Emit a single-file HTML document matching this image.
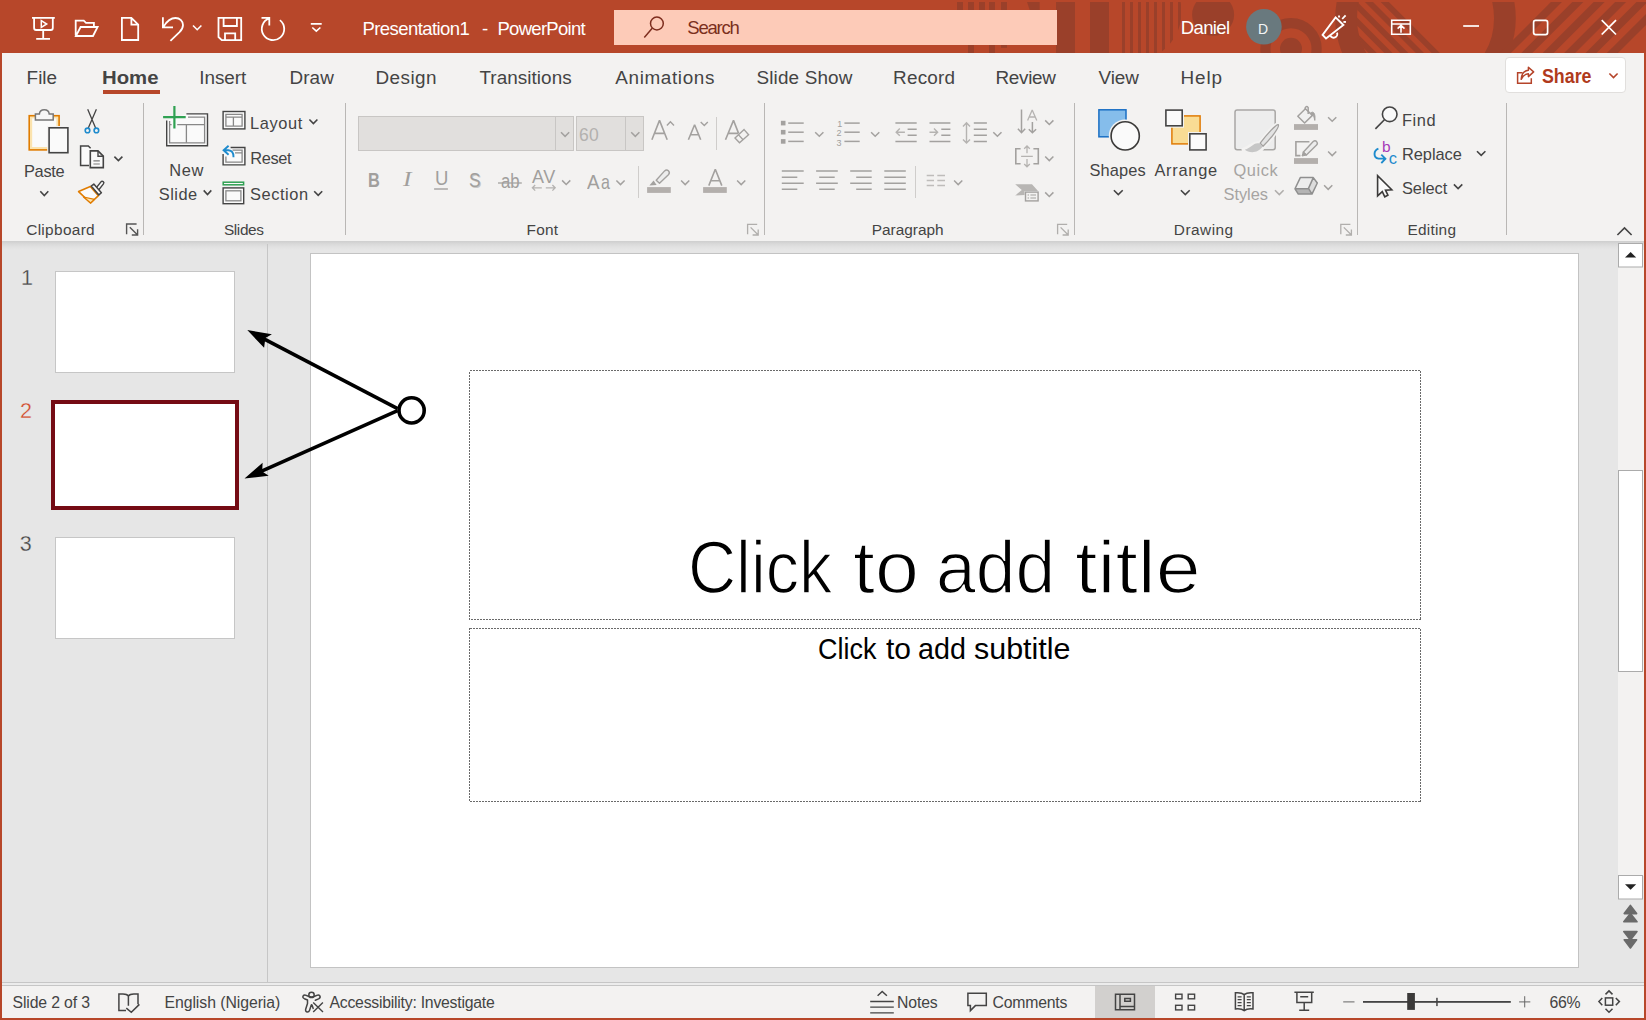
<!DOCTYPE html>
<html lang="en">
<head>
<meta charset="utf-8">
<title>Presentation1 - PowerPoint</title>
<style>
html,body{margin:0;padding:0;}
body{width:1646px;height:1020px;position:relative;overflow:hidden;background:#e6e6e6;font-family:'Liberation Sans',sans-serif;}
.t{position:absolute;line-height:1;white-space:pre;}
.abs{position:absolute;}
svg{position:absolute;overflow:visible;}
#titlebar{position:absolute;left:0;top:0;width:1646px;height:53px;background:#b7472a;}
#tabs{position:absolute;left:2px;top:53px;width:1642px;height:47px;background:#f3f2f1;}
#ribbon{position:absolute;left:2px;top:100px;width:1642px;height:141px;background:#f3f2f1;}
#ribshadow{position:absolute;left:2px;top:241px;width:1642px;height:9px;background:linear-gradient(#cecece,#dadada 35%,#e2e2e2 70%,#e6e6e6);}
#thumbpane{position:absolute;left:2px;top:247px;width:265px;height:735px;background:#e6e6e6;}
#splitter{position:absolute;left:267px;top:244px;width:1px;height:738px;background:#c6c6c6;}
#editpane{position:absolute;left:268px;top:247px;width:1350px;height:735px;background:#e6e6e6;}
#slide{position:absolute;left:310px;top:253px;width:1267px;height:713px;background:#fff;border:1px solid #c3c3c3;box-sizing:content-box;}
#vscroll{position:absolute;left:1618px;top:250px;width:26px;height:626px;background:#f3f2f1;}
#statusbar{position:absolute;left:2px;top:986px;width:1642px;height:32px;background:#f3f2f1;}
.winb{position:absolute;background:#b7472a;}
.sep{position:absolute;width:1px;background:#b9b7b5;top:103px;height:132px;}
.sep2{position:absolute;width:1px;background:#cfcdcb;}
.thumb{position:absolute;left:55px;width:178px;height:100px;background:#fff;border:1px solid #c6c6c6;}
.ph{position:absolute;}
</style>
</head>
<body>
<div id="titlebar">
<svg width="1646" height="53" viewBox="0 0 1646 53">
<defs><clipPath id="tbclip"><rect x="0" y="2" width="1646" height="51"/></clipPath><clipPath id="thinclip"><circle cx="1132.6" cy="12" r="49"/></clipPath><clipPath id="wedgeclip"><rect x="1300" y="2" width="56.1" height="51"/></clipPath><clipPath id="dstripe"><circle cx="1425.5" cy="18.2" r="69"/></clipPath></defs>
<g id="tbpattern" fill="#9a402a" clip-path="url(#tbclip)">
<rect x="957" y="0" width="6" height="30"/><rect x="968" y="0" width="6" height="53"/><rect x="979" y="0" width="6" height="30"/><rect x="989" y="0" width="6" height="53"/><rect x="1001" y="0" width="6" height="47.8"/><polygon points="1026.4,0 1039.7,0 1039.7,14 1031,14"/><rect x="1056" y="0" width="19" height="53"/><rect x="1090" y="0" width="19" height="53"/>
<g clip-path="url(#thinclip)"><rect x="1122" y="0" width="3" height="53"/><rect x="1130" y="0" width="3" height="53"/><rect x="1138" y="0" width="3" height="53"/><rect x="1146" y="0" width="3" height="53"/><rect x="1154" y="0" width="3" height="53"/><rect x="1162" y="0" width="3" height="53"/><rect x="1170" y="0" width="3" height="53"/><rect x="1178" y="0" width="3" height="53"/></g>
<circle cx="1213.1" cy="14.8" r="21"/>
<circle cx="1291" cy="48.7" r="25.6" fill="none" stroke="#9a402a" stroke-width="10.2"/><circle cx="1291" cy="48.7" r="11"/>
<circle cx="1425.5" cy="18.2" r="79.4" fill="none" stroke="#9a402a" stroke-width="21.8"/>
<g clip-path="url(#dstripe)"><polygon points="1300.0,0 1308.1,0 1361.1,53 1353.0,53"/><polygon points="1315.7,0 1323.8,0 1376.8,53 1368.7,53"/><polygon points="1331.4,0 1339.5,0 1392.5,53 1384.4,53"/><polygon points="1347.2,0 1355.3,0 1408.3,53 1400.2,53"/><polygon points="1362.9,0 1371.0,0 1424.0,53 1415.9,53"/><polygon points="1378.7,0 1386.8,0 1439.8,53 1431.7,53"/></g>
<polygon points="1552.9,0 1563.9,0 1510.9,53 1499.9,53"/><polygon points="1574.3,0 1585.3,0 1532.3,53 1521.3,53"/><polygon points="1595.7,0 1606.7,0 1553.7,53 1542.7,53"/><polygon points="1617.1,0 1628.1,0 1575.1,53 1564.1,53"/><polygon points="1638.5,0 1649.5,0 1596.5,53 1585.5,53"/><polygon points="1659.9,0 1670.9,0 1617.9,53 1606.9,53"/>
</g>
<rect x="614" y="10" width="443" height="35" fill="#fdcbb8"/>
<g fill="none" stroke="#7d2d1e" stroke-width="1.5"><circle cx="656.9" cy="23.5" r="6.4"/><path d="M652.2,28.3 L644.3,37.4"/></g>
<circle cx="1263.9" cy="26.8" r="17.8" fill="#69797e"/>
<g id="qat" fill="none" stroke="#fff" stroke-width="1.8" stroke-linejoin="miter">
<path d="M32,17.9 H54.8 M34.1,18 V28 Q34.1,30 36.1,30 H50.8 Q52.8,30 52.8,28 V18 M43.2,30 V38.8 M36.2,38.8 H50"/>
<path d="M41.3,20.6 V27.4 L46.7,24 Z" stroke-width="1.5"/>
<path d="M75.7,35.5 V20.7 H83.8 L86,22.8 H93.9 V26.6 M80.6,27 H97.6 L93,36 H75.9 Z"/>
<path d="M121.9,17.9 H131.4 L138.2,24.7 V40 H121.9 Z M131.4,17.9 V24.7 H138.2"/>
<path d="M162.9,17.3 V27.4 H173 M163.6,26.6 C167,21 171,18 175.5,18 C180,18 183,21.3 183,25 C183,28 181.7,30 179.5,32.2 L170.4,40.8"/>
<path d="M193,25.5 L197.2,29.7 L201.4,25.5" stroke-width="1.6"/>
<path d="M218.5,17.9 H241.2 V40.2 H221.8 L218.5,37 Z M223.6,17.9 V26 H236.9 V17.9 M225,40.2 V33.3 H235.2 V40.2"/>
<path d="M269.2,18.4 A11.2,11.2 0 1 0 279.9,20.1 M261.5,17.9 H269.3 V25.6"/>
<path d="M310.8,23.9 H321.7 M312.3,27.5 L316.3,31.2 L320.4,27.5" stroke-width="1.6"/>
</g>
<g id="winctl" fill="none" stroke="#fff" stroke-width="1.7">
<path d="M1335.6,17.4 L1343.4,25 L1326,38.4 L1322.6,35 Z M1330.2,35.4 A3.5,3.5 0 0 0 1337,32.6" stroke-width="1.9"/>
<path d="M1338.7,15.4 L1339.4,17.6 M1345.6,15.3 L1342.2,19 M1343.4,21.8 L1345.9,22" stroke-width="1.8"/>
<path d="M1391.7,20.3 H1410.3 V34.2 H1391.7 Z M1391.7,24 H1410.3 M1401,32.8 V26.2 M1397.6,28.6 L1401,25.4 L1404.5,28.6" stroke-width="1.6"/>
<path d="M1463.2,26 H1479"/>
<rect x="1533.6" y="20.4" width="14" height="14.2" rx="2"/>
<path d="M1601.7,20.2 L1616,34.5 M1616,20.2 L1601.7,34.5"/>
</g>
</svg>
<span class="t" style="left:362.50px;top:20.25px;font-size:18.5px;color:#fff;letter-spacing:-0.575px;">Presentation1</span>
<span class="t" style="left:481.90px;top:20.25px;font-size:18.5px;color:#fff;letter-spacing:-0.600px;">-</span>
<span class="t" style="left:497.50px;top:20.25px;font-size:18.5px;color:#fff;letter-spacing:-0.722px;">PowerPoint</span>
<span class="t" style="left:687.30px;top:19.25px;font-size:18.5px;color:#7b2f1d;letter-spacing:-1.200px;">Search</span>
<span class="t" style="left:1180.80px;top:19.25px;font-size:18.5px;color:#fff;letter-spacing:-0.640px;">Daniel</span>
<span class="t" style="left:1257.90px;top:22.00px;font-size:14px;color:#f4f6f6;letter-spacing:0.400px;">D</span>
</div>

<div id="tabs"></div>
<div class="abs" id="tabrow" style="left:0;top:0">
<div class="abs" id="sharebtn" style="left:1505px;top:57px;width:119px;height:34px;background:#fff;border:1px solid #e1dfdd;border-radius:4px"></div>
<span class="t" style="left:26.60px;top:69.05px;font-size:18.9px;color:#444;">File</span>
<span class="t" style="left:199.30px;top:69.05px;font-size:18.9px;color:#444;letter-spacing:-0.060px;">Insert</span>
<span class="t" style="left:289.40px;top:69.05px;font-size:18.9px;color:#444;letter-spacing:0.133px;">Draw</span>
<span class="t" style="left:375.40px;top:69.05px;font-size:18.9px;color:#444;letter-spacing:0.480px;">Design</span>
<span class="t" style="left:479.40px;top:69.05px;font-size:18.9px;color:#444;letter-spacing:0.060px;">Transitions</span>
<span class="t" style="left:615.30px;top:69.05px;font-size:18.9px;color:#444;letter-spacing:0.622px;">Animations</span>
<span class="t" style="left:756.50px;top:69.05px;font-size:18.9px;color:#444;letter-spacing:0.156px;">Slide Show</span>
<span class="t" style="left:893.10px;top:69.05px;font-size:18.9px;color:#444;letter-spacing:0.220px;">Record</span>
<span class="t" style="left:995.50px;top:69.05px;font-size:18.9px;color:#444;letter-spacing:-0.320px;">Review</span>
<span class="t" style="left:1098.50px;top:69.05px;font-size:18.9px;color:#444;letter-spacing:-0.067px;">View</span>
<span class="t" style="left:1180.60px;top:69.05px;font-size:18.9px;color:#444;letter-spacing:0.833px;">Help</span>
<span class="t" style="left:102.22px;top:69.05px;font-size:18.9px;color:#444;font-weight:700;transform:scaleX(1.076);transform-origin:0 0;">Home</span>
<span class="t" style="left:1541.70px;top:67.25px;font-size:19.5px;color:#b03a1c;font-weight:700;transform:scaleX(0.913);transform-origin:0 0;">Share</span>
<div class="abs" style="left:103px;top:90px;width:57px;height:4px;background:#b7472a"></div>
<svg style="left:0;top:53px" width="1646" height="47" viewBox="0 53 1646 47">
<g id="shareicon" fill="none" stroke="#b5442a" stroke-width="1.5">
<path d="M1522.6,72.8 H1517.6 V83.2 H1531.3 V78.2"/>
<path d="M1521.2,79.3 C1521.6,74 1524.4,70.6 1528.4,70.2 V67.2 L1533.6,71.9 L1528.4,76.6 V73.7 C1525.4,73.9 1523,75.6 1521.2,79.3 Z" stroke-linejoin="round"/>
<path d="M1609.4,73.5 L1613.5,77.6 L1617.6,73.5" stroke-width="1.6"/>
</g>

</svg>
</div>

<div id="ribbon"></div>
<div class="abs" id="ribboncontent" style="left:0;top:0">
<div class="sep" style="left:143px"></div>
<div class="sep" style="left:345px"></div>
<div class="sep" style="left:764px"></div>
<div class="sep" style="left:1074px"></div>
<div class="sep" style="left:1357px"></div>
<div class="sep" style="left:1506px"></div>
<div class="sep2" style="left:716px;top:117px;height:33px"></div>
<div class="sep2" style="left:638px;top:166px;height:32px"></div>
<div class="sep2" style="left:915px;top:166px;height:32px"></div>
<div class="abs" id="fontname" style="left:358px;top:116px;width:214px;height:33px;background:#e1dfdd;border:1px solid #c8c6c4"></div>
<div class="abs" style="left:555px;top:117px;width:1px;height:33px;background:#c8c6c4"></div>
<div class="abs" id="fontsize" style="left:576px;top:116px;width:66px;height:33px;background:#e1dfdd;border:1px solid #c8c6c4"></div>
<div class="abs" style="left:625px;top:117px;width:1px;height:33px;background:#c8c6c4"></div>
<svg style="left:0;top:100px" width="1646" height="140" viewBox="0 100 1646 140">
<g id="ic-clipboard">
<!-- paste -->
<rect x="29.2" y="115.7" width="29.9" height="34.2" fill="#fbe3ae" stroke="#e07c00" stroke-width="1.6"/>
<rect x="32.2" y="118.4" width="24.2" height="28.6" fill="#fafafa"/>
<path d="M35.4,120 V114 H39.4 C39.6,111.5 41.6,109.8 44.3,109.8 C47,109.8 49,111.5 49.2,114 H53.2 V120 Z" fill="#f6f6f6" stroke="#777" stroke-width="1.5"/>
<rect x="47.2" y="126" width="22.5" height="28.6" fill="#f3f2f1"/>
<rect x="49.1" y="127.8" width="18.8" height="24.9" fill="#fafafa" stroke="#444" stroke-width="1.6"/>
<path d="M40.3,191.3 L44.3,195.5 L48.3,191.3" fill="none" stroke="#444" stroke-width="1.6"/>
<!-- cut -->
<path d="M87.7,109.3 L95.6,128 M96.4,109.3 L88.3,128" fill="none" stroke="#444" stroke-width="1.3"/>
<circle cx="87.5" cy="130.4" r="2.3" fill="none" stroke="#1e8bcd" stroke-width="1.6"/>
<circle cx="96.4" cy="130.4" r="2.3" fill="none" stroke="#1e8bcd" stroke-width="1.6"/>
<!-- copy -->
<path d="M89,165.4 H80.6 V145.9 H88.3 L90.6,148.2" fill="#fafafa" stroke="#444" stroke-width="1.5"/>
<path d="M90.3,150.9 H98 L103.3,156.2 V167.6 H90.3 Z" fill="#fafafa" stroke="#444" stroke-width="1.6"/>
<path d="M98,150.9 V156.2 H103.3" fill="none" stroke="#444" stroke-width="1.4"/>
<path d="M93.4,160.8 H99.8 M93.4,164 H99.8" stroke="#7a7a7a" stroke-width="1.2"/>
<path d="M114.4,156.6 L118.4,160.6 L122.4,156.6" fill="none" stroke="#444" stroke-width="1.6"/>
<!-- format painter -->
<path d="M78.6,191.6 L90.3,186.5 L98.4,195.6 L90.6,203 Z" fill="#fafafa" stroke="#e07c00" stroke-width="1.6" stroke-linejoin="round"/>
<path d="M83.5,197 L94.5,199.3 L90.6,203 Z" fill="#fbe3ae" stroke="#e07c00" stroke-width="1.2" stroke-linejoin="round"/>
<path d="M96.6,190 L102.2,182.9" stroke="#444" stroke-width="4.6" stroke-linecap="round"/>
<path d="M96.6,190 L102.2,182.9" stroke="#fafafa" stroke-width="1.8" stroke-linecap="round"/>
<path d="M91.2,186 L93.8,184.1 L101.4,192.8 L98.9,194.9 Z" fill="#fafafa" stroke="#444" stroke-width="1.5" stroke-linejoin="round"/>
<!-- launcher -->
<path d="M126.6,234.2 V224 H136.6 M129.8,227.2 L137.4,234.8 M137.6,229.2 V235 H131.8" fill="none" stroke="#555" stroke-width="1.4"/>
</g>
<g id="ic-slides">
<!-- new slide -->
<path d="M186.4,113.9 H207.5 V145.7 H166.7 V120.5" fill="#fafafa" stroke="#444" stroke-width="1.4"/>
<path d="M188,117.1 H204.6 V142.8 H169.6 V121" fill="none" stroke="#888" stroke-width="1.3"/>
<path d="M177.2,124.7 H204.6 M169.6,124.7 H171.6 M186.4,124.7 V142.8" fill="none" stroke="#888" stroke-width="1.3"/>
<path d="M163.1,117.1 H185.7 M174.4,106.1 V128.5" stroke="#2fa152" stroke-width="2.2"/>
<path d="M203.7,190.4 L207.5,194.5 L211.3,190.4" fill="none" stroke="#444" stroke-width="1.6"/>
<!-- layout -->
<rect x="223.1" y="111.5" width="21.8" height="17.4" fill="#fafafa" stroke="#444" stroke-width="1.4"/>
<path d="M225.9,114.3 H242.1 V126.2 H225.9 Z M225.9,117.2 H242.1 M233.4,117.2 V126.2" fill="none" stroke="#888" stroke-width="1.3"/>
<path d="M309.4,119.5 L313.4,123.6 L317.4,119.5" fill="none" stroke="#444" stroke-width="1.6"/>
<!-- reset -->
<path d="M230.6,147.5 H244.9 V164.9 H223.1 V154" fill="#fafafa" stroke="#444" stroke-width="1.4"/>
<path d="M232.5,150.2 H242.1 V162.1 H225.9 V156.5 M235,152.8 H242.1" fill="none" stroke="#888" stroke-width="1.3"/>
<path d="M228.6,145.8 L223.6,150.3 L228.6,154.8 M223.8,150.3 H228.5 C231.6,150.5 233.6,153 233.5,157.2" fill="none" stroke="#1e8bcd" stroke-width="1.9"/>
<!-- section -->
<rect x="223.2" y="182.2" width="20.4" height="2.6" fill="#fafafa" stroke="#2fa152" stroke-width="1.5"/>
<rect x="223.1" y="187.9" width="20.6" height="15.8" fill="#fafafa" stroke="#444" stroke-width="1.4"/>
<rect x="225.9" y="190.8" width="15" height="10" fill="none" stroke="#888" stroke-width="1.3"/>
<path d="M314.2,191.2 L318.2,195.4 L322.2,191.2" fill="none" stroke="#444" stroke-width="1.6"/>
</g>

<g id="ic-font">
<path d="M561.0,132.3 L565.1,136.4 L569.2,132.3" fill="none" stroke="#a3a19f" stroke-width="1.5"/>
<path d="M631.2,132.3 L635.3,136.4 L639.4,132.3" fill="none" stroke="#a3a19f" stroke-width="1.5"/>
<path d="M651.9,139.8 L659.5,120.4 L667.2,139.8 M654.8,133.4 H664.3" fill="none" stroke="#a3a19f" stroke-width="1.6" stroke-linejoin="bevel"/>
<path d="M666.9,125.4 L670.4,121.8 L674,125.4" fill="none" stroke="#a3a19f" stroke-width="1.4"/>
<path d="M688.4,139.8 L694.6,124.8 L700.7,139.8 M690.8,134.7 H698.3" fill="none" stroke="#a3a19f" stroke-width="1.6" stroke-linejoin="bevel"/>
<path d="M700.7,122 L704.3,125.6 L707.8,122" fill="none" stroke="#a3a19f" stroke-width="1.4"/>
<path d="M725.5,139.8 L733.5,120.4 L738.6,133.4 M728.3,133.4 H738.4" fill="none" stroke="#a3a19f" stroke-width="1.6" stroke-linejoin="bevel"/>
<path d="M744.1,129.6 L748.6,134.7 L739.5,142.8 L735,138.1 Z M738.6,134.9 L743.3,140" fill="none" stroke="#a3a19f" stroke-width="1.4"/>
<path d="M434.1,189 H447.9" stroke="#a3a19f" stroke-width="1.4"/>
<path d="M498,183 H521.8" stroke="#a3a19f" stroke-width="1.3"/>
<path d="M532.4,187.8 H541.8 M535.2,185 L532.4,187.8 L535.2,190.6 M545.8,187.8 H555.2 M552.4,185 L555.2,187.8 L552.4,190.6" fill="none" stroke="#b5b3b1" stroke-width="1.3"/>
<path d="M562.1,180.4 L566.2,184.5 L570.3,180.4" fill="none" stroke="#a3a19f" stroke-width="1.5"/>
<path d="M616.4,180.5 L620.5,184.6 L624.6,180.5" fill="none" stroke="#a3a19f" stroke-width="1.5"/>
<rect x="647.1" y="187.1" width="23.7" height="5.8" fill="#b3afac"/>
<path d="M653.6,180.6 L656.6,184.9 L649.4,185.6 Z" fill="#a3a19f"/>
<path d="M656.2,180.2 L664.6,170.9 Q666.6,169 668.4,170.8 Q670.3,172.7 668.4,174.7 L659.5,183.3 Z" fill="#ececec" stroke="#a3a19f" stroke-width="1.4" stroke-linejoin="round"/>
<path d="M681.1,180.5 L685.2,184.6 L689.3,180.5" fill="none" stroke="#a3a19f" stroke-width="1.5"/>
<path d="M708.8,185.6 L715.3,169.3 L721.8,185.6 M711,180.8 H719.8" fill="none" stroke="#a3a19f" stroke-width="1.6" stroke-linejoin="bevel"/>
<rect x="703.1" y="187.1" width="23.7" height="5.8" fill="#b3afac"/>
<path d="M737.1,180.5 L741.2,184.6 L745.3,180.5" fill="none" stroke="#a3a19f" stroke-width="1.5"/>
<path d="M747.6,234.2 V224.4 H757.2 M750.6,227.4 L758,234.8 M758.2,229.4 V235 H752.6" fill="none" stroke="#b0aeac" stroke-width="1.3"/>
</g>
<g id="ic-para">
<rect x="780.9" y="120.8" width="4.6" height="4.6" fill="#a3a19f"/><path d="M788.2,123.1 H803.7" stroke="#a3a19f" stroke-width="1.5"/>
<rect x="780.9" y="129.9" width="4.6" height="4.6" fill="#a3a19f"/><path d="M788.2,132.2 H803.7" stroke="#a3a19f" stroke-width="1.5"/>
<rect x="780.9" y="139.1" width="4.6" height="4.6" fill="#a3a19f"/><path d="M788.2,141.4 H803.7" stroke="#a3a19f" stroke-width="1.5"/>
<path d="M815.2,132.2 L819.3,136.3 L823.4,132.2" fill="none" stroke="#a3a19f" stroke-width="1.5"/>
<path d="M844.4,123.1 H859.7" stroke="#a3a19f" stroke-width="1.5"/>
<path d="M844.4,132.2 H859.7" stroke="#a3a19f" stroke-width="1.5"/>
<path d="M844.4,141.4 H859.7" stroke="#a3a19f" stroke-width="1.5"/>
<path d="M871.1,132.2 L875.2,136.3 L879.3,132.2" fill="none" stroke="#a3a19f" stroke-width="1.5"/>
<path d="M895.4,123.1 H916.7 M895.4,141.4 H916.7 M907.6,129.2 H916.7 M907.6,135.3 H916.7" stroke="#a3a19f" stroke-width="1.5"/>
<path d="M896.3,132.2 H904.9 M899.8,128.6 L896.2,132.2 L899.8,135.8" fill="none" stroke="#b5b3b1" stroke-width="1.4"/>
<path d="M929.5,123.1 H950.4 M929.5,141.4 H950.4 M941.3,129.2 H950.4 M941.3,135.3 H950.4" stroke="#a3a19f" stroke-width="1.5"/>
<path d="M929.5,132.2 H937.5 M934,128.6 L937.6,132.2 L934,135.8" fill="none" stroke="#b5b3b1" stroke-width="1.4"/>
<path d="M973.8,123.1 H986.9 M973.8,129.2 H986.9 M973.8,135.3 H986.9 M973.8,141.4 H986.9" stroke="#a3a19f" stroke-width="1.5"/>
<path d="M966.5,122.8 V143 M963,126.4 L966.5,122.8 L970,126.4 M963,139.5 L966.5,143.1 L970,139.5" fill="none" stroke="#b5b3b1" stroke-width="1.4"/>
<path d="M993.3,132.2 L997.4,136.3 L1001.5,132.2" fill="none" stroke="#a3a19f" stroke-width="1.5"/>
<path d="M1021.5,109.5 V132.6 M1017.9,128.8 L1021.5,132.7 L1025.2,128.8" fill="none" stroke="#a3a19f" stroke-width="1.5"/>
<path d="M1027.6,120.4 L1032.2,109.9 L1036.8,120.4 M1029.2,117 H1035.2" fill="none" stroke="#b5b3b1" stroke-width="1.3" stroke-linejoin="bevel"/>
<path d="M1032.4,122 V132.6 M1028.8,129.2 L1032.4,132.8 L1036.1,129.2" fill="none" stroke="#a3a19f" stroke-width="1.5"/>
<path d="M1045.2,120.4 L1049.3,124.5 L1053.4,120.4" fill="none" stroke="#a3a19f" stroke-width="1.5"/>
<path d="M1020.6,148.7 H1015.8 V163.8 H1020.6 M1033.4,148.7 H1038.3 V163.8 H1033.4" fill="none" stroke="#a3a19f" stroke-width="1.6"/>
<path d="M1021.1,156.3 H1032.8 M1027,146 V153.2 M1024.2,148.8 L1027,146 L1029.8,148.8 M1027,159 V166.8 M1024.2,164 L1027,166.8 L1029.8,164" fill="none" stroke="#b5b3b1" stroke-width="1.3"/>
<path d="M1045.2,156.5 L1049.3,160.6 L1053.4,156.5" fill="none" stroke="#a3a19f" stroke-width="1.5"/>
<path d="M1015.2,184.2 H1032 L1038,191 H1024.5 V195 L1015.2,195.5 L1021.8,190 Z" fill="#b8b6b4"/>
<rect x="1025.5" y="192.1" width="12.6" height="8.8" fill="#f3f2f1" stroke="#a3a19f" stroke-width="1.4"/>
<path d="M1030.4,195 H1036 M1030.4,198 H1036 M1027.6,195 H1029 M1027.6,198 H1029" stroke="#a3a19f" stroke-width="1.2"/>
<path d="M1045.2,192.4 L1049.3,196.5 L1053.4,192.4" fill="none" stroke="#a3a19f" stroke-width="1.5"/>
<path d="M781.8,171.1 H803.7 M781.8,177.2 H797.3 M781.8,183.3 H803.7 M781.8,189.3 H797.3 " stroke="#a3a19f" stroke-width="1.5"/>
<path d="M816.1,171.1 H837.8 M819.2,177.2 H834.7 M816.1,183.3 H837.8 M819.2,189.3 H834.7 " stroke="#a3a19f" stroke-width="1.5"/>
<path d="M850.2,171.1 H871.7 M856.2,177.2 H871.7 M850.2,183.3 H871.7 M856.2,189.3 H871.7 " stroke="#a3a19f" stroke-width="1.5"/>
<path d="M884.3,171.1 H905.8 M884.3,177.2 H905.8 M884.3,183.3 H905.8 M884.3,189.3 H905.8 " stroke="#a3a19f" stroke-width="1.5"/>
<path d="M926.7,175.6 H934 M937.3,175.6 H945 M926.7,180.5 H934 M937.3,180.5 H945 M926.7,185.5 H934 M937.3,185.5 H945 " stroke="#bebcba" stroke-width="1.5"/>
<path d="M954.1,180.5 L958.2,184.6 L962.3,180.5" fill="none" stroke="#a3a19f" stroke-width="1.5"/>
<path d="M1057.6,234.2 V224.4 H1067.2 M1060.6,227.4 L1068,234.8 M1068.2,229.4 V235 H1062.6" fill="none" stroke="#b0aeac" stroke-width="1.3"/>
</g>
<g id="ic-drawing">
<rect x="1098.9" y="109.8" width="27.1" height="27" fill="#85bdeb" stroke="#1a6fc4" stroke-width="1.5"/>
<circle cx="1125.2" cy="135.9" r="16.4" fill="#f3f2f1"/>
<circle cx="1125.2" cy="135.9" r="14.1" fill="#fafafa" stroke="#3b3a39" stroke-width="1.6"/>
<path d="M1113.9,190.3 L1118.3,194.6 L1122.7,190.3" fill="none" stroke="#444" stroke-width="1.6"/>
<rect x="1171.9" y="115.9" width="28.2" height="28" fill="#f9dc94" stroke="#e07b05" stroke-width="1.5"/>
<rect x="1164" y="108.3" width="20" height="19.4" fill="#f3f2f1"/><rect x="1188" y="132" width="20" height="19.8" fill="#f3f2f1"/>
<rect x="1165.9" y="110.1" width="16.3" height="15.7" fill="#fafafa" stroke="#444" stroke-width="1.6"/>
<rect x="1189.8" y="133.8" width="16.3" height="16.1" fill="#fafafa" stroke="#444" stroke-width="1.6"/>
<path d="M1180.9,190.3 L1185.3,194.6 L1189.7,190.3" fill="none" stroke="#444" stroke-width="1.6"/>
<rect x="1235" y="110.1" width="40.2" height="39.7" rx="2.2" fill="#ededed" stroke="#a9a7a5" stroke-width="1.5"/>
<path d="M1278.8,124 C1276,123.5 1266,135 1259.6,143.4 C1253,141.5 1251,148 1243.5,149.6 C1248,154 1258,154.5 1263.2,147 C1270,140 1280.5,127 1278.8,124 Z" fill="#f3f2f1" stroke="#f3f2f1" stroke-width="4" stroke-linejoin="round"/>
<path d="M1278.3,124.6 C1276.5,123.8 1266.5,134.5 1260.2,143.2 L1263,146.2 C1270,139.5 1280,127 1278.3,124.6 Z" fill="#e3e3e3" stroke="#a3a19f" stroke-width="1.3" stroke-linejoin="round"/>
<path d="M1259.8,143.6 C1253.5,141.8 1251.5,148 1244.8,149.8 C1249,153.2 1258,153.8 1262.6,146.6 Z" fill="#c6c6c6"/>
<path d="M1275.0,190.3 L1279.3,194.6 L1283.6,190.3" fill="none" stroke="#b0aeac" stroke-width="1.6"/>
<path d="M1297.8,116.2 L1305.4,108.7 L1312.4,115.4 L1304.6,123 Z" fill="#f0f0f0" stroke="#a3a19f" stroke-width="1.5" stroke-linejoin="round"/>
<path d="M1305.2,109.5 V107.8 Q1306.6,105.5 1308.2,107.6 V114" fill="none" stroke="#a3a19f" stroke-width="1.5"/>
<path d="M1311.2,112.6 C1313.8,110.8 1315.6,114.5 1314.8,120.4 C1314,116.5 1313.4,115.2 1312.2,114.6 Z" fill="#a3a19f" stroke="#a3a19f" stroke-width="1"/>
<rect x="1294" y="124.1" width="24" height="5.8" fill="#b3afac"/>
<path d="M1328.1,117.2 L1332.2,121.3 L1336.3,117.2" fill="none" stroke="#a3a19f" stroke-width="1.5"/>
<path d="M1309.4,141.8 H1295.9 V155.6 H1300.4" fill="none" stroke="#a3a19f" stroke-width="1.6"/>
<path d="M1303.2,152.2 L1313.2,141.6 Q1315,140 1316.6,141.6 Q1318.2,143.4 1316.6,145 L1306.4,155 Z" fill="#ececec" stroke="#a3a19f" stroke-width="1.4" stroke-linejoin="round"/>
<path d="M1303.4,151.8 L1306.6,155 L1302,156 Z" fill="#a3a19f" stroke="#a3a19f" stroke-width="1" stroke-linejoin="round"/>
<rect x="1294" y="158.1" width="24" height="5.8" fill="#b3afac"/>
<path d="M1328.1,151.5 L1332.2,155.6 L1336.3,151.5" fill="none" stroke="#a3a19f" stroke-width="1.5"/>
<path d="M1300.3,177.6 H1313.3 L1308.5,188.4 L1295,188.8 Z" fill="#ededed"/>
<path d="M1313.3,177.6 L1317.3,183 L1312,194.1 L1308.5,188.4 Z" fill="#dcdcdc"/>
<path d="M1295,188.8 L1308.5,188.4 L1312,194.1 H1298.3 Z" fill="#b4b4b4"/>
<path d="M1300.3,177.6 H1313.3 L1317.3,183 L1312,194.1 H1298.3 L1295,188.8 Z M1295,188.8 L1308.5,188.4 L1313.3,177.6 M1308.5,188.4 L1312,194.1" fill="none" stroke="#8f8f8f" stroke-width="1.5" stroke-linejoin="round"/>
<path d="M1324.1,185.3 L1328.2,189.4 L1332.3,185.3" fill="none" stroke="#a3a19f" stroke-width="1.5"/>
<path d="M1340.8,234.2 V224.4 H1350.4 M1343.8,227.4 L1351.2,234.8 M1351.4,229.4 V235 H1345.8" fill="none" stroke="#b0aeac" stroke-width="1.3"/>
</g>
<g id="ic-editing">
<circle cx="1389.7" cy="114.3" r="7.3" fill="#fafafa" stroke="#444" stroke-width="1.6"/><path d="M1384.4,119.8 L1375.4,128.9" stroke="#444" stroke-width="1.6"/>
<path d="M1378.4,148.6 C1373.4,150.5 1373,157.5 1378.6,158.6 H1385 M1381.3,154.6 L1385.4,158.7 L1381.3,163.1" fill="none" stroke="#1e8bcd" stroke-width="1.9"/>
<path d="M1477.0,151.2 L1481.2,155.4 L1485.4,151.2" fill="none" stroke="#444" stroke-width="1.6"/>
<path d="M1377.6,175.6 V195.9 L1382.3,191.6 L1384.8,196.8 L1387.9,195.2 L1385.5,190.2 L1391.8,189.8 Z" fill="#fafafa" stroke="#3b3a39" stroke-width="1.6" stroke-linejoin="miter"/>
<path d="M1453.9,184.4 L1458.1,188.6 L1462.3,184.4" fill="none" stroke="#444" stroke-width="1.6"/>
<path d="M1617.4,235 L1624.5,227.9 L1631.6,235" fill="none" stroke="#444" stroke-width="1.6"/>
</g>
</svg>
<span class="t" style="left:24.00px;top:162.80px;font-size:16.4px;color:#444;letter-spacing:-0.325px;">Paste</span>
<span class="t" style="left:26.20px;top:221.80px;font-size:15.4px;color:#444;letter-spacing:0.325px;">Clipboard</span>
<span class="t" style="left:169.30px;top:161.80px;font-size:16.4px;color:#444;letter-spacing:0.600px;">New</span>
<span class="t" style="left:158.70px;top:185.80px;font-size:16.4px;color:#444;letter-spacing:0.525px;">Slide</span>
<span class="t" style="left:249.90px;top:114.80px;font-size:16.4px;color:#444;letter-spacing:0.640px;">Layout</span>
<span class="t" style="left:250.20px;top:149.80px;font-size:16.4px;color:#444;letter-spacing:-0.350px;">Reset</span>
<span class="t" style="left:249.90px;top:185.80px;font-size:16.4px;color:#444;letter-spacing:0.600px;">Section</span>
<span class="t" style="left:223.90px;top:221.80px;font-size:15.4px;color:#444;letter-spacing:-0.360px;">Slides</span>
<span class="t" style="left:578.90px;top:127.25px;font-size:17.5px;color:#b3b1af;letter-spacing:0.300px;">60</span>
<span class="t" style="left:526.50px;top:221.80px;font-size:15.4px;color:#444;letter-spacing:0.233px;">Font</span>
<span class="t" style="left:871.80px;top:221.80px;font-size:15.4px;color:#444;letter-spacing:-0.012px;">Paragraph</span>
<span class="t" style="left:1089.40px;top:161.80px;font-size:16.4px;color:#444;letter-spacing:0.160px;">Shapes</span>
<span class="t" style="left:1154.40px;top:161.80px;font-size:16.4px;color:#444;letter-spacing:0.750px;">Arrange</span>
<span class="t" style="left:1233.50px;top:161.80px;font-size:16.4px;color:#a6a4a2;letter-spacing:0.575px;">Quick</span>
<span class="t" style="left:1223.50px;top:185.80px;font-size:16.4px;color:#a6a4a2;letter-spacing:-0.040px;">Styles</span>
<span class="t" style="left:1173.80px;top:221.80px;font-size:15.4px;color:#444;letter-spacing:0.483px;">Drawing</span>
<span class="t" style="left:1402.00px;top:111.80px;font-size:16.4px;color:#444;letter-spacing:0.600px;">Find</span>
<span class="t" style="left:1402.00px;top:145.80px;font-size:16.4px;color:#444;letter-spacing:-0.050px;">Replace</span>
<span class="t" style="left:1402.00px;top:179.80px;font-size:16.4px;color:#444;letter-spacing:-0.060px;">Select</span>
<span class="t" style="left:1407.50px;top:221.80px;font-size:15.4px;color:#444;letter-spacing:0.233px;">Editing</span>
<span class="t" style="left:368.02px;top:169.00px;font-size:21px;color:#a19f9d;font-weight:700;transform:scaleX(0.779);transform-origin:0 0;">B</span>
<span class="t" style="left:403.40px;top:169.00px;font-size:21px;color:#a19f9d;font-style:italic;font-family:'Liberation Serif',serif;transform:scaleX(1.213);transform-origin:0 0;">I</span>
<span class="t" style="left:434.65px;top:169.25px;font-size:19.5px;color:#a19f9d;transform:scaleX(0.950);transform-origin:0 0;">U</span>
<span class="t" style="left:470.08px;top:170.00px;font-size:21px;color:#c8c6c4;transform:scaleX(0.823);transform-origin:0 0;">S</span>
<span class="t" style="left:469.08px;top:169.00px;font-size:21px;color:#a19f9d;transform:scaleX(0.823);transform-origin:0 0;">S</span>
<span class="t" style="left:500.70px;top:172.25px;font-size:19.5px;color:#a19f9d;transform:scaleX(0.857);transform-origin:0 0;">ab</span>
<span class="t" style="left:532.10px;top:168.00px;font-size:18px;color:#a19f9d;letter-spacing:0.400px;">AV</span>
<span class="t" style="left:586.50px;top:171.00px;font-size:21px;color:#a19f9d;transform:scaleX(0.893);transform-origin:0 0;">A</span>
<span class="t" style="left:601.04px;top:171.00px;font-size:21px;color:#a19f9d;transform:scaleX(0.764);transform-origin:0 0;">a</span>
<span class="t" style="left:837.20px;top:119.50px;font-size:9px;color:#a19f9d;letter-spacing:-2.400px;">1</span>
<span class="t" style="left:836.50px;top:128.50px;font-size:9px;color:#a19f9d;letter-spacing:-0.800px;">2</span>
<span class="t" style="left:836.50px;top:138.50px;font-size:9px;color:#a19f9d;letter-spacing:-0.800px;">3</span>
<span class="t" style="left:1381.90px;top:138.75px;font-size:15.5px;color:#a53ab8;letter-spacing:0.800px;">b</span>
<span class="t" style="left:1388.80px;top:149.75px;font-size:16.5px;color:#1e8bcd;letter-spacing:-1.700px;">c</span>
</div>

<div id="thumbpane"></div>
<div id="editpane"></div>
<div id="ribshadow"></div>
<div id="splitter"></div>
<div class="abs" id="thumbs" style="left:0;top:0">
<div class="thumb" style="top:271px"></div>
<div class="abs" style="left:51px;top:400px;width:180px;height:102px;background:#fff;border:4px solid #750b14"></div>
<div class="thumb" style="top:537px"></div>
<span class="t" style="left:21.00px;top:268.25px;font-size:21.5px;color:#444;letter-spacing:-2.400px;-webkit-text-stroke:0.3px #e6e6e6;">1</span>
<span class="t" style="left:19.90px;top:401.25px;font-size:21.5px;color:#d24726;letter-spacing:-0.200px;-webkit-text-stroke:0.3px #e6e6e6;">2</span>
<span class="t" style="left:19.80px;top:534.25px;font-size:21.5px;color:#444;letter-spacing:-0.400px;-webkit-text-stroke:0.3px #e6e6e6;">3</span>
</div>

<div id="slide"></div>
<div class="abs" id="slidecontent" style="left:0;top:0">
<svg style="left:0;top:0" width="1646" height="1020" viewBox="0 0 1646 1020" shape-rendering="crispEdges">
<rect x="469.5" y="370.5" width="951" height="249" fill="none" stroke="#6a6a6a" stroke-width="1" stroke-dasharray="2 1"/>
<rect x="469.5" y="628.5" width="951" height="173" fill="none" stroke="#6a6a6a" stroke-width="1" stroke-dasharray="2 1"/>
</svg>
<span class="t" style="left:688.00px;top:530.50px;font-size:74px;color:#000;transform:scaleX(0.900);transform-origin:0 0;-webkit-text-stroke:1.5px #fff;">Click</span>
<span class="t" style="left:852.73px;top:530.50px;font-size:74px;color:#000;transform:scaleX(1.066);transform-origin:0 0;-webkit-text-stroke:1.5px #fff;">to</span>
<span class="t" style="left:936.11px;top:530.50px;font-size:74px;color:#000;transform:scaleX(0.965);transform-origin:0 0;-webkit-text-stroke:1.5px #fff;">add</span>
<span class="t" style="left:1074.91px;top:530.50px;font-size:74px;color:#000;transform:scaleX(1.092);transform-origin:0 0;-webkit-text-stroke:1.5px #fff;">title</span>
<span class="t" style="left:817.79px;top:633.75px;font-size:29.5px;color:#000;transform:scaleX(0.913);transform-origin:0 0;">Click</span>
<span class="t" style="left:885.50px;top:633.75px;font-size:29.5px;color:#000;transform:scaleX(1.017);transform-origin:0 0;">to</span>
<span class="t" style="left:917.93px;top:633.75px;font-size:29.5px;color:#000;transform:scaleX(0.974);transform-origin:0 0;">add</span>
<span class="t" style="left:973.67px;top:633.75px;font-size:29.5px;color:#000;transform:scaleX(1.032);transform-origin:0 0;">subtitle</span>
</div>

<div id="vscroll"></div>
<svg style="left:0;top:240px" width="1646" height="746" viewBox="0 240 1646 746">
<g id="vscrollparts">
<rect x="1618.5" y="243.5" width="24" height="23.5" fill="#fff" stroke="#ababab" stroke-width="1"/>
<path d="M1625,257.6 H1636.2 L1630.6,252 Z" fill="#222"/>
<rect x="1618.5" y="470.5" width="24" height="201" fill="#fff" stroke="#ababab" stroke-width="1"/>
<rect x="1618.5" y="875.5" width="24" height="23.5" fill="#fff" stroke="#ababab" stroke-width="1"/>
<path d="M1625,884.2 H1636.2 L1630.6,889.8 Z" fill="#222"/>
<g fill="#6a6a6a" stroke="#6a6a6a" stroke-width="1.6" stroke-linejoin="round"><path d="M1630.4,905.4 L1636.6,913.6 H1624.2 Z"/><path d="M1630.4,913.4 L1637,921.8 H1623.8 Z"/><path d="M1630.4,948 L1636.6,939.8 H1624.2 Z"/><path d="M1630.4,940 L1637,931.6 H1623.8 Z"/></g>
</g>
<g id="annotation" stroke="#000" fill="none">
<path d="M397.6,408.6 L262,337.8" stroke-width="3.6"/>
<path d="M247.3,330.1 L271.9,334.2 L265.4,337.9 L264.1,347.8 Z" fill="#000" stroke="none"/>
<path d="M397.6,410.6 L260,471.8" stroke-width="3.6"/>
<path d="M244.5,478.6 L262.6,462.8 L262.2,471.4 L268.7,475.8 Z" fill="#000" stroke="none"/>
<circle cx="411.6" cy="410.4" r="12.6" fill="#fff" stroke-width="3.6"/>
</g>
</svg>

<div class="abs" style="left:2px;top:982px;width:1642px;height:1px;background:#c6c6c6"></div>
<div class="abs" style="left:2px;top:983px;width:1642px;height:2px;background:#ececec"></div>
<div class="abs" style="left:2px;top:985px;width:1642px;height:1px;background:#c6c6c6"></div>
<div id="statusbar"></div>
<div class="abs" id="statuscontent" style="left:0;top:0">
<div class="abs" style="left:1095px;top:986px;width:60px;height:32px;background:#d2d0ce"></div>
<svg style="left:0;top:986px" width="1646" height="32" viewBox="0 986 1646 32">
<g id="ic-status" fill="none" stroke="#444" stroke-width="1.5">
<path d="M126,1010.4 H118.9 V994 H123 Q127,994 128.4,996 Q129.8,994 133.8,994 H138 V1004.2 M128.4,996 V1005.8 M126.3,1008.2 L131.3,1012.3 L139.4,1004.4"/>
<circle cx="311.5" cy="994.9" r="2.7"/>
<path d="M315.3,1000.2 L318.6,998.9 Q320.8,997.6 319.9,996 Q318.8,994.4 316.8,995.4 Q311.5,998.6 306.2,995.4 Q304.2,994.4 303.1,996 Q302.2,997.6 304.4,998.7 L307.5,1000 V1003.6 L305.6,1009.6 Q305.4,1011.8 307.4,1012 Q309,1012 309.6,1010.2 L311.2,1005.2 Q311.6,1004.2 312.1,1005.3 L313.2,1008.4" stroke-linejoin="round" stroke-linecap="round"/>
<path d="M313.2,1002.5 L323,1011.9 M322.9,1002.4 L313.2,1011.9" stroke-width="1.4"/>
<path d="M877.6,995.7 L882.2,991.4 L886.9,995.7" stroke-width="1.5"/><path d="M870.2,1001.5 H893.8 M870.2,1007.1 H893.8 M870.2,1012.8 H893.8" stroke-width="1.3"/>
<path d="M967.9,993.2 H986.3 V1005.6 H975.4 L970.4,1010.6 V1005.6 H967.9 Z"/>
<path d="M1115.5,994.2 H1134.5 V1009.8 H1115.5 Z M1120,994.2 V1009.8 M1120,1006.6 H1134.5 M1124.8,998.6 H1130.4 V1001.2 H1124.8 Z"/>
<rect x="1175.6" y="994.2" width="6.4" height="4.6" stroke-width="1.4"/>
<rect x="1175.6" y="1005.3" width="6.4" height="4.6" stroke-width="1.4"/>
<rect x="1188.2" y="994.2" width="6.4" height="4.6" stroke-width="1.4"/>
<rect x="1188.2" y="1005.3" width="6.4" height="4.6" stroke-width="1.4"/>
<path d="M1235.4,992.8 Q1241.5,992.2 1244.2,994.6 Q1246.9,992.2 1253,992.8 V1008.9 Q1246.9,1008.3 1244.2,1010.6 Q1241.5,1008.3 1235.4,1008.9 Z M1244.2,994.6 V1010.4"/>
<path d="M1237.6,996.8 H1241.6 M1246.8,996.8 H1250.8 M1237.6,999.7 H1241.6 M1246.8,999.7 H1250.8 M1237.6,1002.7 H1241.6 M1246.8,1002.7 H1250.8 M1237.6,1005.6 H1241.6 M1246.8,1005.6 H1250.8 " stroke-width="1.2"/>
<path d="M1294.4,992.2 H1313.8 M1296.9,992.2 V1002.4 H1311.7 V992.2 M1300.2,996.8 H1308.2 M1304.2,1002.4 V1010.2 M1299.2,1010.2 H1309.2"/>
</g>
<g id="zoomslider">
<rect x="1343.2" y="1001.4" width="11.3" height="1" fill="#666"/>
<rect x="1363" y="1001" width="147.8" height="1.8" fill="#444"/>
<rect x="1407.2" y="993" width="7.7" height="16.9" fill="#3b3a39"/>
<rect x="1436.2" y="997.8" width="1.5" height="8.3" fill="#444"/>
<rect x="1519.1" y="1001.4" width="11.2" height="1" fill="#666"/><rect x="1524.2" y="996.2" width="1" height="11.2" fill="#666"/>
<g fill="none" stroke="#444" stroke-width="1.5"><rect x="1605.4" y="997.9" width="7.3" height="7.3"/><path d="M1605.5,994.4 L1609,990.9 L1612.5,994.4 M1605.5,1008.7 L1609,1012.2 L1612.5,1008.7 M1602.3,998 L1598.9,1001.6 L1602.3,1005.3 M1615.8,998 L1619.4,1001.6 L1615.8,1005.3"/></g>
</g>
</svg>
<span class="t" style="left:12.50px;top:994.60px;font-size:15.8px;color:#444;letter-spacing:-0.136px;">Slide 2 of 3</span>
<span class="t" style="left:164.50px;top:994.60px;font-size:15.8px;color:#444;letter-spacing:-0.062px;">English (Nigeria)</span>
<span class="t" style="left:329.50px;top:994.60px;font-size:15.8px;color:#444;letter-spacing:-0.240px;">Accessibility: Investigate</span>
<span class="t" style="left:897.00px;top:994.60px;font-size:15.8px;color:#444;letter-spacing:-0.125px;">Notes</span>
<span class="t" style="left:992.50px;top:994.60px;font-size:15.8px;color:#444;letter-spacing:-0.214px;">Comments</span>
<span class="t" style="left:1549.40px;top:994.60px;font-size:15.8px;color:#444;letter-spacing:-0.250px;">66%</span>
</div>

<div class="winb" style="left:0;top:53px;width:2px;height:967px"></div>
<div class="winb" style="left:1644px;top:53px;width:2px;height:967px"></div>
<div class="winb" style="left:0;top:1018px;width:1646px;height:2px"></div>
</body>
</html>
